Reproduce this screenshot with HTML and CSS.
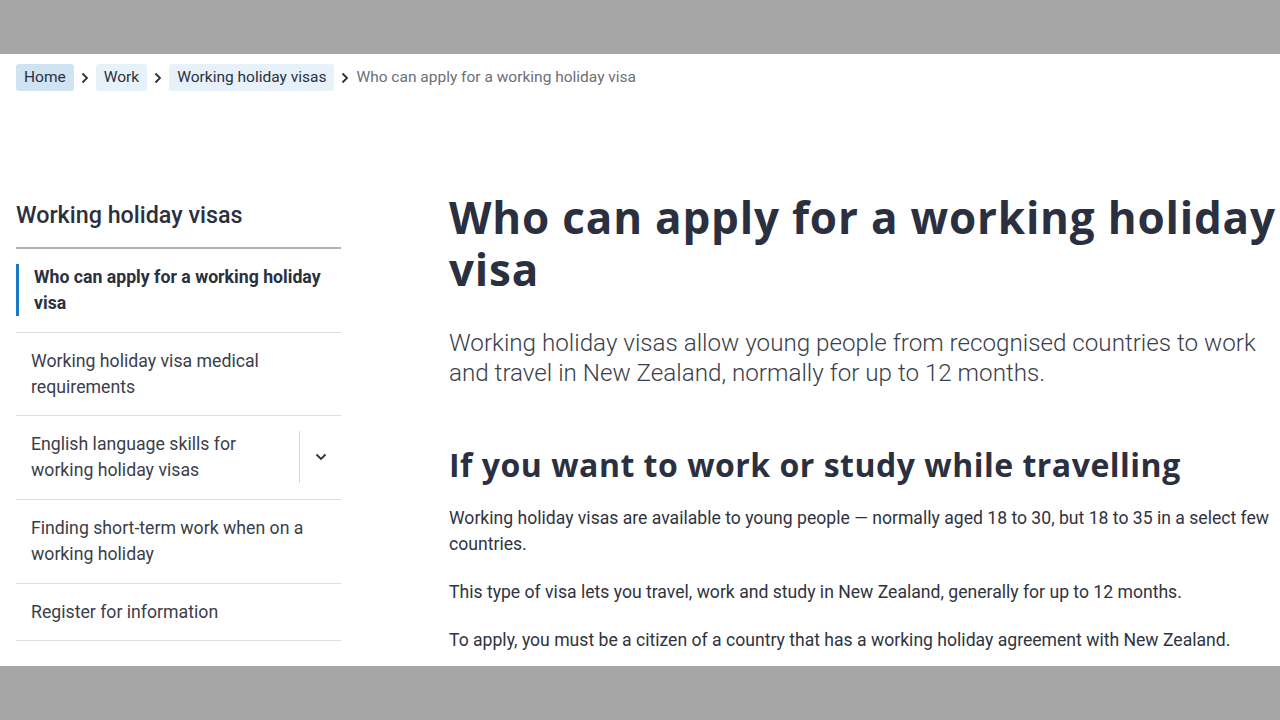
FILE: index.html
```html
<!DOCTYPE html>
<html lang="en">
<head>
<meta charset="utf-8">
<title>Who can apply for a working holiday visa</title>
<link rel="stylesheet" href="styles.css">
</head>
<body>
<div class="page">
  <nav class="crumbs">
    <a class="crumb crumb-focus" href="#">Home</a>
    <svg class="sep" viewBox="0 0 8 12" width="8" height="12"><path d="M1.5 1.5 6 6l-4.5 4.5" fill="none" stroke="#2b3040" stroke-width="1.8"/></svg>
    <a class="crumb" href="#">Work</a>
    <svg class="sep" viewBox="0 0 8 12" width="8" height="12"><path d="M1.5 1.5 6 6l-4.5 4.5" fill="none" stroke="#2b3040" stroke-width="1.8"/></svg>
    <a class="crumb" href="#">Working holiday visas</a>
    <svg class="sep" viewBox="0 0 8 12" width="8" height="12"><path d="M1.5 1.5 6 6l-4.5 4.5" fill="none" stroke="#2b3040" stroke-width="1.8"/></svg>
    <span class="current">Who can apply for a working holiday visa</span>
  </nav>

  <div class="layout">
    <aside class="side">
      <h2 class="side-title">Working holiday visas</h2>
      <ul class="side-list">
        <li class="side-item active"><a href="#">Who can apply for a working holiday visa</a></li>
        <li class="side-item"><a href="#">Working holiday visa medical requirements</a></li>
        <li class="side-item has-sub">
          <a href="#">English language skills for working holiday visas</a>
          <button class="toggle" type="button" aria-label="Expand">
            <svg viewBox="0 0 12 8" width="12" height="8"><path d="M1.5 1.5 6 6l4.5-4.5" fill="none" stroke="#2b3040" stroke-width="1.8"/></svg>
          </button>
        </li>
        <li class="side-item"><a href="#">Finding short-term work when on a working holiday</a></li>
        <li class="side-item"><a href="#">Register for information</a></li>
      </ul>
    </aside>

    <main class="main">
      <h1 class="title">Who can apply for a working holiday visa</h1>
      <p class="lead">Working holiday visas allow young people from recognised countries to work and travel in New Zealand, normally for up to 12 months.</p>
      <h2 class="h2">If you want to work or study while travelling</h2>
      <p class="body">Working holiday visas are available to young people — normally aged 18 to 30, but 18 to 35 in a select few countries.</p>
      <p class="body">This type of visa lets you travel, work and study in New Zealand, generally for up to 12 months.</p>
      <p class="body">To apply, you must be a citizen of a country that has a working holiday agreement with New Zealand.</p>
    </main>
  </div>
</div>
</body>
</html>
```

FILE: styles.css
```css
html, body {
  margin: 0;
  padding: 0;
}
body {
  background: #a6a6a6;
  font-family: Roboto, "Liberation Sans", sans-serif;
  color: #2b3040;
}
.page {
  margin-top: 54px;
  height: 612px;
  background: #ffffff;
  overflow: hidden;
  padding: 10px 0 0 16px;
  box-sizing: border-box;
}
.crumbs {
  display: flex;
  align-items: center;
  gap: 7px;
  height: 27px;
  font-size: 15.5px;
}
.crumb {
  display: block;
  height: 27px;
  line-height: 27px;
  padding: 0 8px;
  border-radius: 3px;
  background: #e7f1f9;
  color: #2b3040;
  text-decoration: none;
}
.crumb-focus {
  background: #cfe3f3;
}
.sep {
  display: block;
}
.current {
  color: #6b6f78;
  line-height: 27px;
}
.layout {
  display: flex;
  gap: 108px;
  margin-top: 100px;
}
.side {
  flex: 0 0 325px;
}
.side-title {
  margin: 10px 0 0;
  font-size: 23.3px;
  line-height: 28px;
  font-weight: 500;
  padding-bottom: 18px;
  border-bottom: 2px solid #b3b3bb;
}
.side-list {
  list-style: none;
  margin: 0;
  padding: 0;
}
.side-item {
  display: flex;
  align-items: stretch;
  padding: 15px 0 15.7px;
  border-bottom: 1px solid #dedede;
  font-size: 17.7px;
  line-height: 26px;
}
.side-item a {
  flex: 1;
  display: block;
  padding-left: 15px;
  color: #3a3e4a;
  text-decoration: none;
}
.side-item.active a {
  border-left: 3px solid #1a7ac6;
  font-weight: 700;
  color: #2b3040;
  padding-left: 15px;
  padding-right: 8px;
}
.side-item.has-sub a {
  padding-right: 20px;
}
.toggle {
  flex: 0 0 42px;
  border: 0;
  border-left: 1px solid #d8d8d8;
  background: transparent;
  padding: 0;
  display: flex;
  align-items: center;
  justify-content: center;
}
.main {
  flex: 0 0 836px;
  min-width: 0;
}
.title {
  margin: 0;
  font-family: "Open Sans", Roboto, sans-serif;
  font-size: 44px;
  line-height: 52px;
  font-weight: 700;
  letter-spacing: 0.8px;
  color: #2b3040;
}
.lead {
  margin: 33px 0 0;
  font-size: 24.2px;
  line-height: 30px;
  font-weight: 300;
  color: #3a3e4a;
}
.h2 {
  margin: 57px 0 0;
  font-family: "Open Sans", Roboto, sans-serif;
  font-size: 32px;
  line-height: 40px;
  font-weight: 700;
  letter-spacing: 0.5px;
  color: #2b3040;
}
.body {
  margin: 20px 0 0;
  font-size: 17.6px;
  line-height: 26px;
  color: #2f3340;
}
.body + .body {
  margin-top: 22px;
}
```
